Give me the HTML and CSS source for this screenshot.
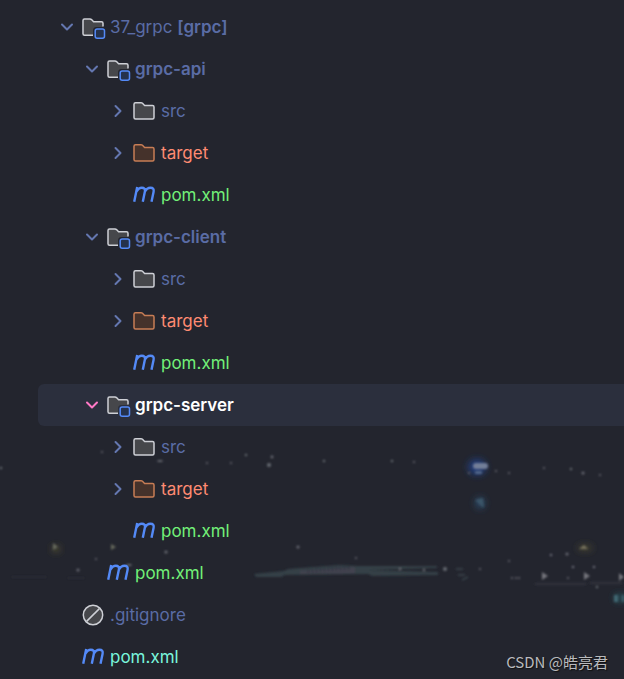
FILE: index.html
```html
<!DOCTYPE html>
<html lang="en">
<head>
  <meta charset="UTF-8" />
  <meta name="viewport" content="width=device-width,initial-scale=1.0"/>
  <title>37_grpc – Project</title>
  <link rel="stylesheet" href="styles.css">
</head>
<body>
  <!-- shared icons -->
  <svg class="sprite" aria-hidden="true">
    <symbol id="i-down" viewBox="0 0 18 18"><path d="M4 6.5l5 5 5-5" fill="none" stroke="currentColor" stroke-width="2" stroke-linecap="round" stroke-linejoin="round"/></symbol>
    <symbol id="i-right" viewBox="0 0 18 18"><path d="M6.5 4l5 5-5 5" fill="none" stroke="currentColor" stroke-width="2" stroke-linecap="round" stroke-linejoin="round"/></symbol>
    <symbol id="i-folder" viewBox="0 0 24 24"><path d="M1 5.2Q1 3.7 2.5 3.7H8Q8.9 3.7 9.5 4.3L11.6 6.5H19.5Q21 6.5 21 8V18.5Q21 20 19.5 20H2.5Q1 20 1 18.5Z" stroke="currentColor" stroke-width="1.5" stroke-linejoin="round"/></symbol>
    <symbol id="i-module" viewBox="0 0 24 24">
      <path d="M11 20.3H2.5Q1 20.3 1 18.8V5.5Q1 4 2.5 4H8Q8.9 4 9.5 4.6L11.6 6.8H19.5Q21 6.8 21 8.3V12H14.5Q11 12 11 15.5Z" fill="#46474b"/>
      <path d="M11 20.3H2.5Q1 20.3 1 18.8V5.5Q1 4 2.5 4H8Q8.9 4 9.5 4.6L11.6 6.8H19.5Q21 6.8 21 8.3V11.5" fill="none" stroke="#ced0d6" stroke-width="1.5" stroke-linejoin="round"/>
      <rect x="13.2" y="13.9" width="9.3" height="9.3" rx="2" fill="#25324d" stroke="#548af7" stroke-width="1.5"/>
    </symbol>
    <symbol id="i-maven" viewBox="0 0 24 24"><path d="M1.2 18.8L4.2 4M3.4 8.8Q5.5 4.8 8.8 4.8Q12.6 4.8 11.9 8.5L9.8 18.8M11.8 8.8Q13.9 4.8 17.4 4.8Q21.4 4.8 20.6 8.7L18.5 18.8" fill="none" stroke="#548af7" stroke-width="2.4"/></symbol>
    <symbol id="i-ignored" viewBox="0 0 24 24"><circle cx="11" cy="12" r="9.7" fill="#46474b" stroke="#ced0d6" stroke-width="1.5"/><path d="M4.6 18.4L17.4 5.6" stroke="#ced0d6" stroke-width="1.5"/></symbol>
  </svg>

  <!-- night skyline behind the tree -->
  <svg class="scene" viewBox="0 0 624 239" aria-hidden="true">
    <defs>
      <filter id="soft" x="-50%" y="-50%" width="200%" height="200%"><feGaussianBlur stdDeviation="0.8"/></filter>
      <filter id="glow" x="-100%" y="-100%" width="300%" height="300%"><feGaussianBlur stdDeviation="3.5"/></filter>
    </defs>
    <g filter="url(#glow)">
      <ellipse cx="477" cy="27" rx="9" ry="8" fill="#203e7c"/>
      <ellipse cx="480" cy="63" rx="5" ry="6" fill="#294763"/>
      <ellipse cx="585" cy="108" rx="8" ry="3" fill="#46442f"/>
      <ellipse cx="56" cy="109" rx="4" ry="3" fill="#56522f"/>
      <ellipse cx="620" cy="158" rx="6" ry="4" fill="#28515a"/>
    </g>
    <g filter="url(#soft)">
      <path d="M254 134L284 131 288 129 340 125 358 126 437 126 437 128 368 130 438 132 438 135 372 136 368 134 284 135 282 137 256 137Z" fill="#344147"/>
      <path d="M300 131L355 127 355 133 300 134Z" fill="#42434f"/>
      <path d="M308 131L350 128" fill="none" stroke="#2b303c" stroke-width="4" stroke-dasharray="1 3"/>
      <path d="M535 144H586M590 143H622" stroke="#41434a"/>
      <path d="M12 137H46M68 138H84" stroke="#35333a"/>
      <path d="M456 129H463M458 135H465M462 140L468 137" stroke="#48585e"/>
      <rect x="473" y="23" width="15" height="6" rx="3" fill="#727e98"/>
      <rect x="475" y="31" width="7" height="3" rx="1" fill="#53678b"/>
      <path d="M475 60l8-2 1 10-4-3z" fill="#3a5568"/>
      <path d="M542 132l6 4-6 4zM584 132l6 4-6 4zM619 133l5 4-5 4z" fill="#74757b"/>
      <path d="M53 103l5 4-5 3zM111 104l5 3-5 3z" fill="#66695d"/>
      <path d="M579 109l5-4 4 4z" fill="#77725d"/>
      <path d="M614 155h4v7h-4zM622 155h2v7h-2z" fill="#406772"/>
      <g fill="#686a72">
        <circle cx="1" cy="28" r="1.2"/><circle cx="102" cy="12" r="1"/><ellipse cx="160" cy="21" rx="3" ry="1"/><circle cx="207" cy="23" r="1"/><circle cx="231" cy="23" r="1"/>
        <circle cx="246" cy="15" r="1.2"/><circle cx="272" cy="17" r="1.4"/><circle cx="269" cy="25" r="2"/><circle cx="324" cy="21" r="1.2"/><circle cx="392" cy="21" r="1.2"/><circle cx="414" cy="22" r="1"/>
        <circle cx="469" cy="33" r="1"/><circle cx="496" cy="31" r="1"/><circle cx="509" cy="33" r="1"/><circle cx="544" cy="28" r="1"/><circle cx="571" cy="29" r="1.2"/><circle cx="583" cy="33" r="1.5"/><circle cx="600" cy="35" r="1"/>
        <circle cx="298" cy="107" r="1.5"/><circle cx="356" cy="118" r="1"/><circle cx="400" cy="129" r="1.3"/><circle cx="424" cy="130" r="1.2"/><circle cx="445" cy="129" r="2"/><circle cx="480" cy="129" r="1"/>
        <circle cx="512" cy="138" r="1"/><circle cx="516" cy="138" r="1"/><circle cx="519" cy="138" r="1"/><circle cx="509" cy="121" r="1"/><circle cx="551" cy="115" r="1.3"/><circle cx="567" cy="114" r="1.5"/><circle cx="573" cy="127" r="1.3"/><circle cx="568" cy="138" r="1"/><circle cx="594" cy="127" r="1.3"/><circle cx="597" cy="147" r="1.2"/>
        <circle cx="78" cy="130" r="1.5"/><circle cx="96" cy="119" r="1"/><circle cx="166" cy="112" r="1.6"/><ellipse cx="129" cy="125" rx="3" ry="1"/>
      </g>
    </g>
  </svg>

  <ul class="tree">
    <li class="row">
      <button class="toggle" aria-label="Collapse 37_grpc"><svg><use href="#i-down"/></svg></button>
      <svg class="icon"><use href="#i-module"/></svg>
      <span class="name">37_grpc <b>[grpc]</b></span>
    </li>
    <li class="row level-2">
      <button class="toggle" aria-label="Collapse grpc-api"><svg><use href="#i-down"/></svg></button>
      <svg class="icon"><use href="#i-module"/></svg>
      <span class="name module">grpc-api</span>
    </li>
    <li class="row level-3">
      <button class="toggle" aria-label="Expand src"><svg><use href="#i-right"/></svg></button>
      <svg class="icon folder"><use href="#i-folder"/></svg>
      <span class="name">src</span>
    </li>
    <li class="row level-3">
      <button class="toggle" aria-label="Expand target"><svg><use href="#i-right"/></svg></button>
      <svg class="icon folder excluded"><use href="#i-folder"/></svg>
      <span class="name ignored">target</span>
    </li>
    <li class="row level-3 leaf">
      <svg class="icon"><use href="#i-maven"/></svg>
      <span class="name added">pom.xml</span>
    </li>
    <li class="row level-2">
      <button class="toggle" aria-label="Collapse grpc-client"><svg><use href="#i-down"/></svg></button>
      <svg class="icon"><use href="#i-module"/></svg>
      <span class="name module">grpc-client</span>
    </li>
    <li class="row level-3">
      <button class="toggle" aria-label="Expand src"><svg><use href="#i-right"/></svg></button>
      <svg class="icon folder"><use href="#i-folder"/></svg>
      <span class="name">src</span>
    </li>
    <li class="row level-3">
      <button class="toggle" aria-label="Expand target"><svg><use href="#i-right"/></svg></button>
      <svg class="icon folder excluded"><use href="#i-folder"/></svg>
      <span class="name ignored">target</span>
    </li>
    <li class="row level-3 leaf">
      <svg class="icon"><use href="#i-maven"/></svg>
      <span class="name added">pom.xml</span>
    </li>
    <li class="row level-2 selected">
      <button class="toggle" aria-label="Collapse grpc-server"><svg><use href="#i-down"/></svg></button>
      <svg class="icon"><use href="#i-module"/></svg>
      <span class="name module">grpc-server</span>
    </li>
    <li class="row level-3">
      <button class="toggle" aria-label="Expand src"><svg><use href="#i-right"/></svg></button>
      <svg class="icon folder"><use href="#i-folder"/></svg>
      <span class="name">src</span>
    </li>
    <li class="row level-3">
      <button class="toggle" aria-label="Expand target"><svg><use href="#i-right"/></svg></button>
      <svg class="icon folder excluded"><use href="#i-folder"/></svg>
      <span class="name ignored">target</span>
    </li>
    <li class="row level-3 leaf">
      <svg class="icon"><use href="#i-maven"/></svg>
      <span class="name added">pom.xml</span>
    </li>
    <li class="row level-2 leaf">
      <svg class="icon"><use href="#i-maven"/></svg>
      <span class="name added">pom.xml</span>
    </li>
    <li class="row leaf">
      <svg class="icon"><use href="#i-ignored"/></svg>
      <span class="name">.gitignore</span>
    </li>
    <li class="row leaf">
      <svg class="icon"><use href="#i-maven"/></svg>
      <span class="name modified">pom.xml</span>
    </li>
  </ul>
  <div class="watermark">CSDN @皓亮君</div>
</body>
</html>
```
FILE: styles.css
```css
* {
  box-sizing: border-box;
}
body {
  position: relative;
  margin: 0;
  min-height: 100vh;
  background: #23252e;
  color: #5a6ca5;
  font-family: Inter, "Noto Sans", sans-serif;
  font-size: 17px;
  line-height: 24px;
}
.sprite {
  position: absolute;
  width: 0;
  height: 0;
}
.scene {
  position: absolute;
  left: 0;
  bottom: 0;
  width: 100%;
}
.tree {
  position: relative;
  list-style: none;
  margin: 0;
  padding: 6px 0 0 38px;
}
.row {
  display: flex;
  align-items: center;
  height: 42px;
  padding-left: 20px;
  border-radius: 6px 0 0 6px;
}
.level-2 {
  padding-left: 45px;
}
.level-3 {
  padding-left: 71px;
}
.selected {
  background: #2b2f3d;
}
.toggle {
  width: 18px;
  height: 18px;
  margin-right: 6px;
  padding: 0;
  border: none;
  background: none;
  color: #6477b0;
  cursor: pointer;
}
.toggle svg {
  display: block;
  width: 18px;
  height: 18px;
}
.selected .toggle {
  color: #ff79c6;
}
.icon {
  flex: none;
  width: 24px;
  height: 24px;
  margin-right: 4px;
}
/* files have no arrow, keep the icon column aligned */
.leaf .icon {
  margin-left: 24px;
}
.folder {
  color: #ced0d6;
  fill: #46474b;
}
.excluded {
  color: #c77d55;
  fill: #45322b;
}
.name b,
.module {
  font-weight: 600;
}
.ignored {
  color: #ff8b72;
}
.added {
  color: #72f078;
}
.modified {
  color: #79f5dc;
}
.selected .name {
  color: #fff;
}
.watermark {
  position: absolute;
  right: 16px;
  bottom: 5px;
  color: #b9babd;
  font-family: "Noto Sans CJK SC", sans-serif;
  font-size: 15px;
  text-shadow: 1px 1px 1px #111;
}
```
